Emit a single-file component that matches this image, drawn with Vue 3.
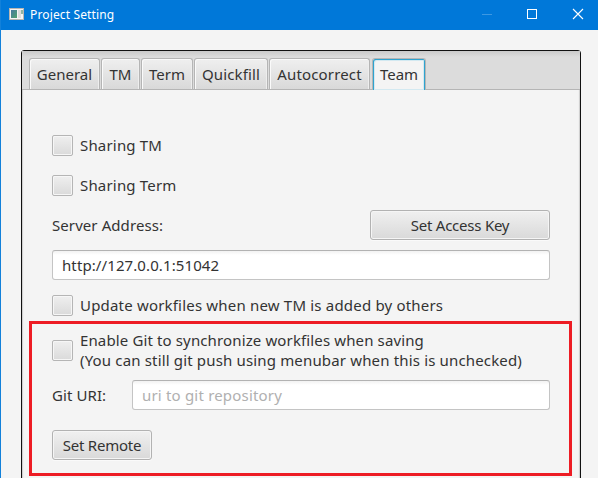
<script setup>
import { ref } from 'vue'

const tabs = [
  { name: 'General', cls: 'general' },
  { name: 'TM', cls: 'tm' },
  { name: 'Term', cls: 'term' },
  { name: 'Quickfill', cls: 'quickfill' },
  { name: 'Autocorrect', cls: 'autocorrect' },
  { name: 'Team', cls: 'team' },
]
const active = ref('Team')
const server = ref('http://127.0.0.1:51042')
const uri = ref('')
</script>

<template>
  <div class="window">
    <header class="titlebar">
      <svg class="app-icon" width="16" height="14" viewBox="0 0 16 14">
        <defs>
          <linearGradient id="pane" x1="0" y1="0" x2="1" y2="1">
            <stop offset="0" stop-color="#4778a0" />
            <stop offset="1" stop-color="#4fa36c" />
          </linearGradient>
        </defs>
        <rect x="0.5" y="1.5" width="14" height="11" fill="#f4f4f4" stroke="#b9b6b2" />
        <rect x="2" y="3" width="6" height="8" fill="url(#pane)" />
        <rect x="9" y="3" width="3" height="8" fill="#dcdcdc" />
        <rect x="12" y="3" width="2" height="4" fill="#8fb3a4" />
      </svg>
      <span class="title">Project Setting</span>
      <div class="controls">
        <svg width="46" height="30" viewBox="0 0 46 30"><path d="M18 14.5h10" stroke="#3d98e2" /></svg>
        <svg width="46" height="30" viewBox="0 0 46 30"><rect x="17.5" y="9.5" width="9" height="9" fill="none" stroke="#fff" /></svg>
        <svg width="46" height="30" viewBox="0 0 46 30"><path d="M17 9l10 10M27 9l-10 10" stroke="#fff" stroke-width="1.1" /></svg>
      </div>
    </header>

    <main class="panel">
      <nav class="tabs">
        <button
          v-for="t in tabs"
          :key="t.name"
          class="tab"
          :class="[t.cls, { active: active === t.name }]"
          @click="active = t.name"
        ><span>{{ t.name }}</span></button>
      </nav>

      <div class="content">
        <label class="check"><i class="box"></i><span class="text t-stm">Sharing TM</span></label>
        <label class="check second"><i class="box"></i><span class="text t-sterm">Sharing Term</span></label>
        <div class="row">
          <span class="t-server">Server Address:</span>
          <button class="btn access"><span>Set Access Key</span></button>
        </div>
        <input v-model="server" class="field address" />
        <label class="check update"><i class="box"></i><span class="text t-update">Update workfiles when new TM is added by others</span></label>

        <section class="git">
          <label class="check tall">
            <i class="box"></i>
            <span class="text"><span class="t-enable">Enable Git to synchronize workfiles when saving</span><br /><span class="t-you">(You can still git push using menubar when this is unchecked)</span></span>
          </label>
          <div class="row uri-row">
            <span class="t-uri">Git URI:</span>
            <input v-model="uri" class="field uri" placeholder="uri to git repository" />
          </div>
          <button class="btn remote"><span>Set Remote</span></button>
        </section>
      </div>
    </main>
  </div>
</template>

<style>
body { background: #f4f4f4; overflow: hidden; }
</style>

<style scoped>
* { box-sizing: border-box; }
.window {
  width: 598px;
  height: 478px;
  overflow: hidden;
  background: #f4f4f4;
  border-left: 1px solid #1281da;
  font-family: "Noto Sans", "Open Sans", sans-serif;
  font-size: 15px;
  line-height: 20px;
  color: #333;
  white-space: nowrap;
}
button, input { font: inherit; color: inherit; margin: 0; outline: none; }
.titlebar {
  height: 30px;
  margin-left: -1px;
  padding-left: 9px;
  display: flex;
  align-items: center;
  background: #0078d9;
  color: #fff;
}
.app-icon { display: block; margin-top: -2px; }
.title { margin-left: 5px; font-size: 12px; letter-spacing: 0.14px; }
.controls { display: flex; margin-left: auto; margin-right: -4px; }
.controls svg { display: block; flex: none; }
.panel {
  width: 560px;
  height: 440px;
  margin: 20px 0 0 20px;
  border: 1px solid #111;
  border-radius: 3px 3px 0 0;
  box-shadow: inset 2px 0 1px -1px #ccc, inset -2px 0 1px -1px #ccc;
}
.tabs {
  height: 39px;
  padding: 7px 0 0 7px;
  display: flex;
  gap: 1px;
  background: linear-gradient(#cacaca, #dcdcdc 6px);
  border-bottom: 1px solid #b5b5b5;
}
.tab {
  height: 31px;
  padding: 0;
  border: 1px solid #b5b5b5;
  border-bottom: 0;
  border-radius: 3px 3px 0 0;
  background: linear-gradient(#efefef, #d9d9d9);
  box-shadow: inset 1px 1px #fafafa, inset -1px 0 #eee;
}
.general { width: 71px; }
.tm { width: 39px; }
.term { width: 52px; }
.quickfill { width: 74px; letter-spacing: 0.15px; }
.autocorrect { width: 101px; letter-spacing: 0.15px; }
.team { width: 54px; margin-left: 1px; }
.tab.active {
  height: 32px;
  padding: 0 0 1px;
  background: linear-gradient(#d3e9f1, #d3e9f1) 0 100% / 100% 1px no-repeat #f4f4f4;
  border-color: #b5b5b5;
  box-shadow: inset 1px 1px #2fa3cf, inset -1px 0 #2fa3cf, inset 2px 2px #d3e9f1, inset -2px 0 #d3e9f1;
}
.content { padding: 45px 0 0 30px; }
.check { display: flex; align-items: center; height: 21px; }
.check.second { margin-top: 19px; }
.text { margin-bottom: 2px; }
.box {
  width: 21px;
  height: 21px;
  margin-right: 7px;
  flex: none;
  border: 1px solid #b5b5b5;
  border-radius: 2px;
  background: linear-gradient(#efefef, #dadada);
  box-shadow: inset 0 0 0 1px #f6f6f6;
}
.row { display: flex; align-items: center; width: 498px; }
.second + .row { margin-top: 14px; }
.btn {
  height: 30px;
  padding: 0;
  border: 1px solid #b2b2b2;
  border-radius: 3px;
  background: linear-gradient(#f0f0f0, #d9d9d9);
  box-shadow: inset 0 0 0 1px #f5f5f5, 0 1px #fafafa;
}
.access { width: 180px; margin-left: auto; letter-spacing: -0.23px; }
.field {
  display: block;
  height: 30px;
  padding: 0 9px;
  border: 1px solid #c4c4c4;
  border-top-color: #b2b2b2;
  border-radius: 3px;
  background: linear-gradient(#f2f2f2, #fff 4px);
}
.field::placeholder { color: #b0b0b0; opacity: 1; }
.address { width: 498px; margin-top: 10px; letter-spacing: 0.1px; }
.update { margin-top: 15px; }
.git {
  width: 543px;
  height: 155px;
  margin: 5px 0 0 -23px;
  padding: 6px 0 0 20px;
  border: 3px solid #ed1c24;
}
.check.tall { height: 41px; }
.uri-row { margin-top: 9px; }
.uri { width: 418px; margin-left: auto; letter-spacing: 0.19px; }
.remote { display: block; width: 100px; margin-top: 20px; letter-spacing: -0.25px; }
.t-stm, .t-sterm { letter-spacing: 0.18px; }
.t-server, .t-uri { letter-spacing: 0.08px; }
.t-update { letter-spacing: 0.19px; }
.t-enable { letter-spacing: 0.13px; }
.t-you { letter-spacing: 0.16px; }
</style>
